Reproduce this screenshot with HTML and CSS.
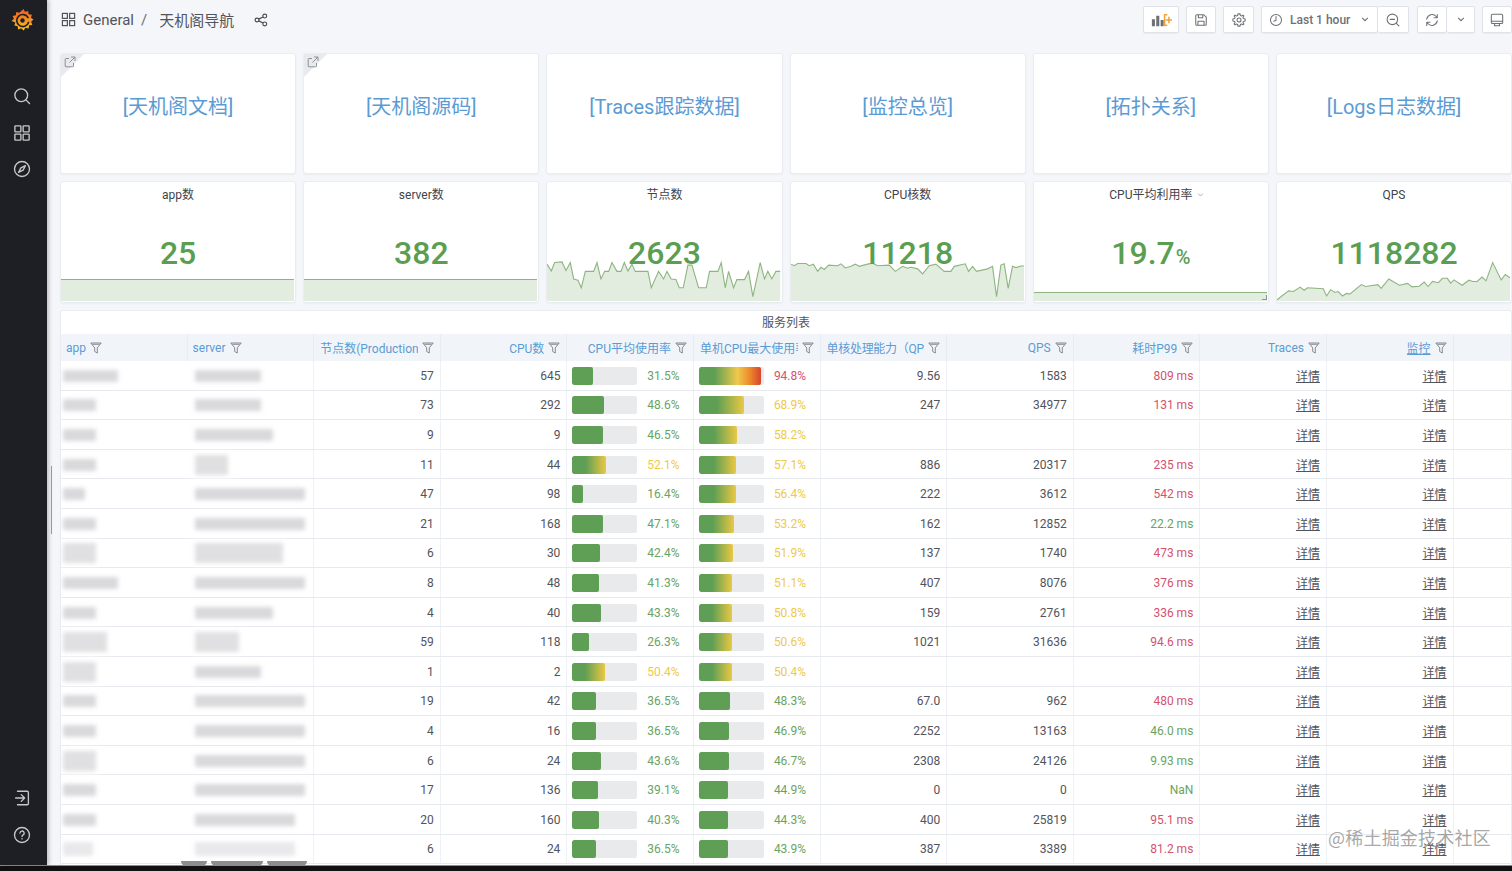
FILE: index.html
```html
<!DOCTYPE html>
<html lang="zh-CN">
<head>
<meta charset="utf-8">
<title>天机阁导航</title>
<link rel="stylesheet" href="styles.css">
</head>
<body>
<div class="app">
  <div class="shell">
    <aside class="sidebar">
      <div class="side-top">
        <svg class="logo" viewBox="0 0 24 24"><defs><linearGradient id="lg" x1="0" y1="1" x2="0" y2="0"><stop offset="0" stop-color="#f7c61e"/><stop offset="1" stop-color="#f0592a"/></linearGradient></defs><path fill="url(#lg)" d="M13 .5l1.600 3 3.200-1 .6 3.400 3.400.6-1 3.100 2.700 2-2.500 2.300 1.300 3.200-3.400.4-.5 3.400-3.300-.8-2 2.800-2.500-2.400-3.100 1.300-.6-3.400-3.400-.6 1-3.200L.5 13l2.600-2.200-1.400-3.100 3.400-.6.3-3.400 3.300.8z"/><path fill="none" stroke="#1d1f24" stroke-width="1.700" stroke-linecap="round" d="M17.800 9.500A6.300 6.300 0 1 0 18.300 14.500"/><circle cx="12" cy="12.500" r="2.300" fill="#1d1f24"/></svg>
        <nav class="side-nav">
          <svg class="side-ico" viewBox="0 0 24 24"><circle cx="11" cy="11" r="8.500"/><path d="M17.500 17.500l4.500 4.500"/></svg>
          <svg class="side-ico" viewBox="0 0 24 24"><rect x="2.500" y="2.500" width="8" height="8" rx=".8"/><rect x="13.500" y="2.500" width="8" height="8" rx=".8"/><rect x="2.500" y="13.500" width="8" height="8" rx=".8"/><rect x="13.500" y="13.500" width="8" height="8" rx=".8"/></svg>
          <svg class="side-ico" viewBox="0 0 24 24"><circle cx="12" cy="12" r="10"/><path d="M16.500 7.500l-3 6-6 3 3-6z"/></svg>
        </nav>
      </div>
      <div class="side-bottom">
        <svg class="side-ico" viewBox="0 0 24 24"><path d="M6 3h13a1.500 1.500 0 0 1 1.500 1.500v15A1.500 1.500 0 0 1 19 21H6M3.500 12H15M11 7.500l4.500 4.500-4.500 4.500"/></svg>
        <svg class="side-ico" viewBox="0 0 24 24"><circle cx="12" cy="12" r="10"/><path d="M9.300 9.500a2.800 2.800 0 1 1 4.200 2.400c-1 .6-1.500 1-1.500 2.100M12 16.800v.4"/></svg>
      </div>
    </aside>
    <main class="main">
      <header class="topbar">
        <div class="crumbs">
          <svg class="crumb-ico" viewBox="0 0 16 16"><rect x="1.500" y="1.500" width="5.300" height="5.300"/><rect x="9.200" y="1.500" width="5.300" height="5.300"/><rect x="1.500" y="9.200" width="5.300" height="5.300"/><rect x="9.200" y="9.200" width="5.300" height="5.300"/></svg>
          <span class="crumb-text">General</span>
          <span class="crumb-sep">/</span>
          <span class="crumb-text">天机阁导航</span>
          <svg class="share-ico" viewBox="0 0 16 16"><circle cx="3.500" cy="8" r="2.200"/><circle cx="12.300" cy="3.500" r="2.200"/><circle cx="12.300" cy="12.500" r="2.200"/><path d="M5.500 7l4.800-2.500M5.500 9l4.800 2.500"/></svg>
        </div>
        <div class="tools">
          <button class="tbtn wide"><svg class="ico" viewBox="0 0 24 16"><path class="solid" d="M1 7h3.500v8H1zM6 3h3.500v12H6zM11 8h3.500v7H11z"/><path class="orange" d="M18 2h-2.500v12H18M20.500 5v6M17.500 8h6"/></svg></button>
          <button class="tbtn"><svg class="ico" viewBox="0 0 16 16"><path d="M2 3.200A1.200 1.200 0 0 1 3.200 2h8l2.800 2.800v8a1.200 1.200 0 0 1-1.200 1.200H3.200A1.200 1.200 0 0 1 2 12.800zM5 2v3.500h5V2M4.500 14V9.500h7V14"/></svg></button>
          <button class="tbtn gear"><svg class="ico" viewBox="0 0 16 16"><circle cx="8" cy="8" r="2.300"/><path d="M6.800 1H9.200L9.600 2.900L10.900 3.500L12.500 2.400L13.600 3.500L12.500 5.100L13.100 6.400L15 6.800V9.200L13.100 9.600L12.500 10.900L13.600 12.500L12.500 13.600L10.900 12.500L9.600 13.100L9.200 15H6.800L6.400 13.100L5.100 12.500L3.500 13.600L2.400 12.500L3.500 10.900L2.900 9.600L1 9.200V6.800L2.900 6.400L3.500 5.100L2.400 3.500L3.500 2.400L5.100 3.500L6.400 2.900Z"/></svg></button>
          <div class="tgroup">
            <button class="tbtn time"><svg class="ico" viewBox="0 0 16 16"><circle cx="8" cy="8" r="6.300"/><path d="M8 4v4.300L5.500 9.500"/></svg><span class="time-label">Last 1 hour</span><svg class="chev" viewBox="0 0 10 6"><path d="M1.500 1L5 4.500 8.500 1"/></svg></button>
            <button class="tbtn joined zoom"><svg class="ico" viewBox="0 0 16 16"><circle cx="7.300" cy="7.300" r="6"/><path d="M11.800 11.800l3 3M4.800 7.300h5"/></svg></button>
          </div>
          <div class="tgroup">
            <button class="tbtn"><svg class="ico" viewBox="0 0 16 16"><path d="M2 7a6.200 6.200 0 0 1 10.800-3l1.200 1.400M14 1.800v3.600h-3.600M14 9a6.200 6.200 0 0 1-10.800 3L2 10.600M2 14.200v-3.600h3.600"/></svg></button>
            <button class="tbtn joined caret"><svg class="chev" viewBox="0 0 10 6"><path d="M1.500 1L5 4.500 8.500 1"/></svg></button>
          </div>
          <button class="tbtn"><svg class="ico" viewBox="0 0 16 16"><path d="M3 1.500h10A1.500 1.500 0 0 1 14.500 3v6.500h-13V3A1.500 1.500 0 0 1 3 1.500zM1.500 9.500v1A1.500 1.500 0 0 0 3 12h10a1.500 1.500 0 0 0 1.500-1.500v-1M5.500 12l-.5 2.500h6l-.5-2.500"/></svg></button>
        </div>
      </header>

      <section class="panels">
        <a class="panel link-panel"><span class="corner"><svg viewBox="0 0 12 12"><path d="M9.500 7v3a.8.800 0 0 1-.8.800H2a.8.800 0 0 1-.8-.8V3.300A.8.800 0 0 1 2 2.500h3M7 1h4v4M11 1L5.500 6.500"/></svg></span>[天机阁文档]</a>
        <a class="panel link-panel"><span class="corner"><svg viewBox="0 0 12 12"><path d="M9.500 7v3a.8.800 0 0 1-.8.800H2a.8.800 0 0 1-.8-.8V3.300A.8.800 0 0 1 2 2.500h3M7 1h4v4M11 1L5.500 6.500"/></svg></span>[天机阁源码]</a>
        <a class="panel link-panel">[Traces跟踪数据]</a>
        <a class="panel link-panel">[监控总览]</a>
        <a class="panel link-panel">[拓扑关系]</a>
        <a class="panel link-panel">[Logs日志数据]</a>

        <div class="panel stat">
          <div class="stat-title">app数</div>
          <div class="flat tall"></div>
          <div class="stat-value">25</div>
        </div>
        <div class="panel stat">
          <div class="stat-title">server数</div>
          <div class="flat tall"></div>
          <div class="stat-value">382</div>
        </div>
        <div class="panel stat">
          <div class="stat-title">节点数</div>
          <svg class="spark" viewBox="25 236 700 146" preserveAspectRatio="none"><polygon class="area" points="25,382 25,265 38,287 48,260 70,258 82,285 95,260 105,312 118,316 128,340 140,288 165,288 175,260 187,312 198,288 210,288 220,260 235,288 247,288 257,260 268,287 280,265 290,288 328,288 338,340 360,288 375,312 385,288 398,312 412,314 422,340 434,340 448,268 460,268 480,340 503,340 513,288 538,288 548,260 560,340 570,288 585,340 595,314 618,314 630,288 643,368 665,260 678,312 688,288 700,312 712,288 725,288 725,382"/><polyline class="line" points="25,265 38,287 48,260 70,258 82,285 95,260 105,312 118,316 128,340 140,288 165,288 175,260 187,312 198,288 210,288 220,260 235,288 247,288 257,260 268,287 280,265 290,288 328,288 338,340 360,288 375,312 385,288 398,312 412,314 422,340 434,340 448,268 460,268 480,340 503,340 513,288 538,288 548,260 560,340 570,288 585,340 595,314 618,314 630,288 643,368 665,260 678,312 688,288 700,312 712,288 725,288"/></svg>
          <div class="stat-value">2623</div>
        </div>
        <div class="panel stat">
          <div class="stat-title">CPU核数</div>
          <svg class="spark" viewBox="755 236 700 146" preserveAspectRatio="none"><polygon class="area" points="755,382 755,265 765,270 775,263 800,263 810,270 822,265 835,288 845,275 855,282 868,268 895,270 905,264 918,277 935,272 948,265 960,272 985,265 1000,262 1015,270 1050,268 1068,288 1090,272 1105,278 1115,275 1135,280 1150,296 1170,270 1190,265 1215,288 1235,288 1245,272 1278,264 1288,288 1300,272 1312,288 1345,280 1360,272 1372,368 1385,268 1395,264 1407,342 1420,272 1430,276 1445,271 1455,271 1455,382"/><polyline class="line" points="755,265 765,270 775,263 800,263 810,270 822,265 835,288 845,275 855,282 868,268 895,270 905,264 918,277 935,272 948,265 960,272 985,265 1000,262 1015,270 1050,268 1068,288 1090,272 1105,278 1115,275 1135,280 1150,296 1170,270 1190,265 1215,288 1235,288 1245,272 1278,264 1288,288 1300,272 1312,288 1345,280 1360,272 1372,368 1385,268 1395,264 1407,342 1420,272 1430,276 1445,271 1455,271"/></svg>
          <div class="stat-value">11218</div>
        </div>
        <div class="panel stat">
          <div class="stat-title"><span class="title-wrap">CPU平均利用率<svg class="title-chev" viewBox="0 0 10 6"><path d="M1.500 1L5 4.500 8.500 1"/></svg></span></div>
          <div class="flat short"></div>
          <div class="stat-value">19.7<span class="unit">%</span></div>
          <span class="resize"></span>
        </div>
        <div class="panel stat">
          <div class="stat-title">QPS</div>
          <svg class="spark" viewBox="740 236 705 146" preserveAspectRatio="none"><polygon class="area" points="740,382 740,378 775,350 790,352 810,338 822,348 832,340 880,343 890,366 902,346 915,355 925,352 938,366 950,358 960,360 995,330 1008,336 1045,330 1055,342 1078,312 1110,332 1135,326 1148,337 1170,335 1185,322 1197,336 1210,320 1228,324 1240,310 1255,310 1265,325 1275,315 1300,332 1320,316 1332,320 1345,320 1360,306 1372,318 1392,260 1418,315 1430,298 1445,308 1445,382"/><polyline class="line" points="740,378 775,350 790,352 810,338 822,348 832,340 880,343 890,366 902,346 915,355 925,352 938,366 950,358 960,360 995,330 1008,336 1045,330 1055,342 1078,312 1110,332 1135,326 1148,337 1170,335 1185,322 1197,336 1210,320 1228,324 1240,310 1255,310 1265,325 1275,315 1300,332 1320,316 1332,320 1345,320 1360,306 1372,318 1392,260 1418,315 1430,298 1445,308"/></svg>
          <div class="stat-value">1118282</div>
        </div>
      </section>

      <section class="panel table-panel">
        <div class="table-title">服务列表</div>
        <div class="row head">
          <div class="th left"><span class="th-label">app</span><svg class="funnel" viewBox="0 0 12 12"><path d="M.8 1h10.400L7.300 5.800v5.200L4.700 9.500V5.800zM2.500 2.300h7"/></svg></div>
          <div class="th left"><span class="th-label">server</span><svg class="funnel" viewBox="0 0 12 12"><path d="M.8 1h10.400L7.300 5.800v5.200L4.700 9.500V5.800zM2.500 2.300h7"/></svg></div>
          <div class="th"><span class="th-label">节点数(Production)</span><svg class="funnel" viewBox="0 0 12 12"><path d="M.8 1h10.400L7.300 5.800v5.200L4.700 9.500V5.800zM2.500 2.300h7"/></svg></div>
          <div class="th"><span class="th-label">CPU数</span><svg class="funnel" viewBox="0 0 12 12"><path d="M.8 1h10.400L7.300 5.800v5.200L4.700 9.500V5.800zM2.500 2.300h7"/></svg></div>
          <div class="th"><span class="th-label">CPU平均使用率</span><svg class="funnel" viewBox="0 0 12 12"><path d="M.8 1h10.400L7.300 5.800v5.200L4.700 9.500V5.800zM2.500 2.300h7"/></svg></div>
          <div class="th"><span class="th-label">单机CPU最大使用率</span><svg class="funnel" viewBox="0 0 12 12"><path d="M.8 1h10.400L7.300 5.800v5.200L4.700 9.500V5.800zM2.500 2.300h7"/></svg></div>
          <div class="th"><span class="th-label tight">单核处理能力（QPS）</span><svg class="funnel" viewBox="0 0 12 12"><path d="M.8 1h10.400L7.300 5.800v5.200L4.700 9.500V5.800zM2.500 2.300h7"/></svg></div>
          <div class="th"><span class="th-label">QPS</span><svg class="funnel" viewBox="0 0 12 12"><path d="M.8 1h10.400L7.300 5.800v5.200L4.700 9.500V5.800zM2.500 2.300h7"/></svg></div>
          <div class="th"><span class="th-label">耗时P99</span><svg class="funnel" viewBox="0 0 12 12"><path d="M.8 1h10.400L7.300 5.800v5.200L4.700 9.500V5.800zM2.500 2.300h7"/></svg></div>
          <div class="th"><span class="th-label">Traces</span><svg class="funnel" viewBox="0 0 12 12"><path d="M.8 1h10.400L7.300 5.800v5.200L4.700 9.500V5.800zM2.500 2.300h7"/></svg></div>
          <div class="th"><span class="th-label under">监控</span><svg class="funnel" viewBox="0 0 12 12"><path d="M.8 1h10.400L7.300 5.800v5.200L4.700 9.500V5.800zM2.500 2.300h7"/></svg></div>
          <div class="th filler"></div>
        </div>

        <div class="row"><div class="td cname"><i class="redact w55"></i></div><div class="td srv"><i class="redact w66"></i></div><div class="td">57</div><div class="td">645</div><div class="td gauge"><div class="track"><div class="fill" style="width:31.5%"></div></div><span class="pct ok">31.5%</span></div><div class="td gauge"><div class="track"><div class="fill hot" style="width:94.8%"></div></div><span class="pct bad">94.8%</span></div><div class="td">9.56</div><div class="td">1583</div><div class="td bad">809 ms</div><div class="td"><a class="lnk">详情</a></div><div class="td"><a class="lnk">详情</a></div><div class="td filler"></div></div>
        <div class="row"><div class="td cname"><i class="redact w33"></i></div><div class="td srv"><i class="redact w66"></i></div><div class="td">73</div><div class="td">292</div><div class="td gauge"><div class="track"><div class="fill" style="width:48.6%"></div></div><span class="pct ok">48.6%</span></div><div class="td gauge"><div class="track"><div class="fill warn" style="width:68.9%"></div></div><span class="pct mid">68.9%</span></div><div class="td">247</div><div class="td">34977</div><div class="td bad">131 ms</div><div class="td"><a class="lnk">详情</a></div><div class="td"><a class="lnk">详情</a></div><div class="td filler"></div></div>
        <div class="row"><div class="td cname"><i class="redact w33"></i></div><div class="td srv"><i class="redact w78"></i></div><div class="td">9</div><div class="td">9</div><div class="td gauge"><div class="track"><div class="fill" style="width:46.5%"></div></div><span class="pct ok">46.5%</span></div><div class="td gauge"><div class="track"><div class="fill warn" style="width:58.2%"></div></div><span class="pct mid">58.2%</span></div><div class="td"></div><div class="td"></div><div class="td"></div><div class="td"><a class="lnk">详情</a></div><div class="td"><a class="lnk">详情</a></div><div class="td filler"></div></div>
        <div class="row"><div class="td cname"><i class="redact w33"></i></div><div class="td srv"><i class="redact w33 tall"></i></div><div class="td">11</div><div class="td">44</div><div class="td gauge"><div class="track"><div class="fill warn" style="width:52.1%"></div></div><span class="pct mid">52.1%</span></div><div class="td gauge"><div class="track"><div class="fill warn" style="width:57.1%"></div></div><span class="pct mid">57.1%</span></div><div class="td">886</div><div class="td">20317</div><div class="td bad">235 ms</div><div class="td"><a class="lnk">详情</a></div><div class="td"><a class="lnk">详情</a></div><div class="td filler"></div></div>
        <div class="row"><div class="td cname"><i class="redact w22"></i></div><div class="td srv"><i class="redact w110"></i></div><div class="td">47</div><div class="td">98</div><div class="td gauge"><div class="track"><div class="fill" style="width:16.4%"></div></div><span class="pct ok">16.4%</span></div><div class="td gauge"><div class="track"><div class="fill warn" style="width:56.4%"></div></div><span class="pct mid">56.4%</span></div><div class="td">222</div><div class="td">3612</div><div class="td bad">542 ms</div><div class="td"><a class="lnk">详情</a></div><div class="td"><a class="lnk">详情</a></div><div class="td filler"></div></div>
        <div class="row"><div class="td cname"><i class="redact w33"></i></div><div class="td srv"><i class="redact w110"></i></div><div class="td">21</div><div class="td">168</div><div class="td gauge"><div class="track"><div class="fill" style="width:47.1%"></div></div><span class="pct ok">47.1%</span></div><div class="td gauge"><div class="track"><div class="fill warn" style="width:53.2%"></div></div><span class="pct mid">53.2%</span></div><div class="td">162</div><div class="td">12852</div><div class="td ok">22.2 ms</div><div class="td"><a class="lnk">详情</a></div><div class="td"><a class="lnk">详情</a></div><div class="td filler"></div></div>
        <div class="row"><div class="td cname"><i class="redact w33 tall"></i></div><div class="td srv"><i class="redact w88 tall"></i></div><div class="td">6</div><div class="td">30</div><div class="td gauge"><div class="track"><div class="fill" style="width:42.4%"></div></div><span class="pct ok">42.4%</span></div><div class="td gauge"><div class="track"><div class="fill warn" style="width:51.9%"></div></div><span class="pct mid">51.9%</span></div><div class="td">137</div><div class="td">1740</div><div class="td bad">473 ms</div><div class="td"><a class="lnk">详情</a></div><div class="td"><a class="lnk">详情</a></div><div class="td filler"></div></div>
        <div class="row"><div class="td cname"><i class="redact w55"></i></div><div class="td srv"><i class="redact w110"></i></div><div class="td">8</div><div class="td">48</div><div class="td gauge"><div class="track"><div class="fill" style="width:41.3%"></div></div><span class="pct ok">41.3%</span></div><div class="td gauge"><div class="track"><div class="fill warn" style="width:51.1%"></div></div><span class="pct mid">51.1%</span></div><div class="td">407</div><div class="td">8076</div><div class="td bad">376 ms</div><div class="td"><a class="lnk">详情</a></div><div class="td"><a class="lnk">详情</a></div><div class="td filler"></div></div>
        <div class="row"><div class="td cname"><i class="redact w33"></i></div><div class="td srv"><i class="redact w78"></i></div><div class="td">4</div><div class="td">40</div><div class="td gauge"><div class="track"><div class="fill" style="width:43.3%"></div></div><span class="pct ok">43.3%</span></div><div class="td gauge"><div class="track"><div class="fill warn" style="width:50.8%"></div></div><span class="pct mid">50.8%</span></div><div class="td">159</div><div class="td">2761</div><div class="td bad">336 ms</div><div class="td"><a class="lnk">详情</a></div><div class="td"><a class="lnk">详情</a></div><div class="td filler"></div></div>
        <div class="row"><div class="td cname"><i class="redact w44 tall"></i></div><div class="td srv"><i class="redact w44 tall"></i></div><div class="td">59</div><div class="td">118</div><div class="td gauge"><div class="track"><div class="fill" style="width:26.3%"></div></div><span class="pct ok">26.3%</span></div><div class="td gauge"><div class="track"><div class="fill warn" style="width:50.6%"></div></div><span class="pct mid">50.6%</span></div><div class="td">1021</div><div class="td">31636</div><div class="td bad">94.6 ms</div><div class="td"><a class="lnk">详情</a></div><div class="td"><a class="lnk">详情</a></div><div class="td filler"></div></div>
        <div class="row"><div class="td cname"><i class="redact w33 tall"></i></div><div class="td srv"><i class="redact w66"></i></div><div class="td">1</div><div class="td">2</div><div class="td gauge"><div class="track"><div class="fill warn" style="width:50.4%"></div></div><span class="pct mid">50.4%</span></div><div class="td gauge"><div class="track"><div class="fill warn" style="width:50.4%"></div></div><span class="pct mid">50.4%</span></div><div class="td"></div><div class="td"></div><div class="td"></div><div class="td"><a class="lnk">详情</a></div><div class="td"><a class="lnk">详情</a></div><div class="td filler"></div></div>
        <div class="row"><div class="td cname"><i class="redact w33"></i></div><div class="td srv"><i class="redact w110"></i></div><div class="td">19</div><div class="td">42</div><div class="td gauge"><div class="track"><div class="fill" style="width:36.5%"></div></div><span class="pct ok">36.5%</span></div><div class="td gauge"><div class="track"><div class="fill" style="width:48.3%"></div></div><span class="pct ok">48.3%</span></div><div class="td">67.0</div><div class="td">962</div><div class="td bad">480 ms</div><div class="td"><a class="lnk">详情</a></div><div class="td"><a class="lnk">详情</a></div><div class="td filler"></div></div>
        <div class="row"><div class="td cname"><i class="redact w33"></i></div><div class="td srv"><i class="redact w110"></i></div><div class="td">4</div><div class="td">16</div><div class="td gauge"><div class="track"><div class="fill" style="width:36.5%"></div></div><span class="pct ok">36.5%</span></div><div class="td gauge"><div class="track"><div class="fill" style="width:46.9%"></div></div><span class="pct ok">46.9%</span></div><div class="td">2252</div><div class="td">13163</div><div class="td ok">46.0 ms</div><div class="td"><a class="lnk">详情</a></div><div class="td"><a class="lnk">详情</a></div><div class="td filler"></div></div>
        <div class="row"><div class="td cname"><i class="redact w33 tall"></i></div><div class="td srv"><i class="redact w110"></i></div><div class="td">6</div><div class="td">24</div><div class="td gauge"><div class="track"><div class="fill" style="width:43.6%"></div></div><span class="pct ok">43.6%</span></div><div class="td gauge"><div class="track"><div class="fill" style="width:46.7%"></div></div><span class="pct ok">46.7%</span></div><div class="td">2308</div><div class="td">24126</div><div class="td ok">9.93 ms</div><div class="td"><a class="lnk">详情</a></div><div class="td"><a class="lnk">详情</a></div><div class="td filler"></div></div>
        <div class="row"><div class="td cname"><i class="redact w33"></i></div><div class="td srv"><i class="redact w110"></i></div><div class="td">17</div><div class="td">136</div><div class="td gauge"><div class="track"><div class="fill" style="width:39.1%"></div></div><span class="pct ok">39.1%</span></div><div class="td gauge"><div class="track"><div class="fill" style="width:44.9%"></div></div><span class="pct ok">44.9%</span></div><div class="td">0</div><div class="td">0</div><div class="td ok">NaN</div><div class="td"><a class="lnk">详情</a></div><div class="td"><a class="lnk">详情</a></div><div class="td filler"></div></div>
        <div class="row"><div class="td cname"><i class="redact w33"></i></div><div class="td srv"><i class="redact w100"></i></div><div class="td">20</div><div class="td">160</div><div class="td gauge"><div class="track"><div class="fill" style="width:40.3%"></div></div><span class="pct ok">40.3%</span></div><div class="td gauge"><div class="track"><div class="fill" style="width:44.3%"></div></div><span class="pct ok">44.3%</span></div><div class="td">400</div><div class="td">25819</div><div class="td bad">95.1 ms</div><div class="td"><a class="lnk">详情</a></div><div class="td"><a class="lnk">详情</a></div><div class="td filler"></div></div>
        <div class="row"><div class="td cname"><i class="redact w30 faint"></i></div><div class="td srv"><i class="redact w100 faint"></i></div><div class="td">6</div><div class="td">24</div><div class="td gauge"><div class="track"><div class="fill" style="width:36.5%"></div></div><span class="pct ok">36.5%</span></div><div class="td gauge"><div class="track"><div class="fill" style="width:43.9%"></div></div><span class="pct ok">43.9%</span></div><div class="td">387</div><div class="td">3389</div><div class="td bad">81.2 ms</div><div class="td"><a class="lnk">详情</a></div><div class="td"><a class="lnk">详情</a></div><div class="td filler"></div></div>
      </section>
    </main>
  </div>
  <div class="bottom-bar"></div>
  <span class="edge-mark"></span>
  <div class="blobs"><i></i><i></i><i></i></div>
  <div class="watermark">@稀土掘金技术社区</div>
</div>
</body>
</html>
```
FILE: styles.css
```css
* { box-sizing: border-box; }
html, body { margin: 0; height: 100%; overflow: hidden; }
body {
  font-family: Roboto, "Noto Sans CJK SC", "Liberation Sans", sans-serif;
  font-size: 12px;
  color: #52545c;
  background: #f5f6f9;
}
.app { position: relative; height: 871px; display: flex; flex-direction: column; overflow: hidden; }
.shell { flex: 1; min-height: 0; display: flex; }
.bottom-bar { height: 6px; flex: none; background: #111; border-top: 1px solid #8d8d8d; }

/* sidebar */
.sidebar {
  flex: none; width: 47px; background: #1d1f24;
  display: flex; flex-direction: column; justify-content: space-between; align-items: center;
  padding: 8px 3px 21px 0;
  box-shadow: 2px 0 4px rgba(0,0,0,.22);
  z-index: 2;
}
.side-top, .side-nav, .side-bottom { display: flex; flex-direction: column; align-items: center; }
.logo { width: 23px; height: 24px; }
.side-nav { gap: 18.500px; margin-top: 55px; }
.side-bottom { gap: 19px; }
.side-ico { width: 18px; height: 18px; fill: none; stroke: #c7c8ca; stroke-width: 1.800; stroke-linecap: round; stroke-linejoin: round; }

/* main */
.main { flex: 1; min-width: 0; padding-left: 13px; display: flex; flex-direction: column; }
.topbar { height: 53px; flex: none; display: flex; justify-content: space-between; padding-bottom: 14px; align-items: center; }
.crumbs { display: flex; align-items: center; padding-left: 1px; }
.crumb-ico { width: 15px; height: 15px; fill: none; stroke: #52545c; stroke-width: 1.300; margin-right: 7px; }
.crumb-text { font-size: 15px; color: #52545c; }
.crumb-sep { font-size: 15px; color: #6a6d74; margin: 0 12px 0 7px; }
.share-ico { width: 14px; height: 14px; fill: none; stroke: #464c54; stroke-width: 1.300; margin-left: 20px; }

.tools { display: flex; align-items: center; gap: 7px; }
.tbtn {
  height: 27px; width: 30px; padding: 0; background: #fff;
  border: 1px solid #dfe3e9; border-radius: 2px;
  display: flex; align-items: center; justify-content: center;
  box-shadow: 0 1px 1px rgba(0,0,0,.04);
  font-family: inherit;
}
.tbtn.wide { width: 36px; }
.tbtn.gear, .tbtn.zoom { width: 31px; }
.tgroup { display: flex; }
.tgroup + .tgroup { margin-left: 1px; }
.tbtn.joined { border-left: 0; }
.tbtn.time { width: 117px; justify-content: flex-start; padding-left: 7px; }
.tbtn.caret { width: 28px; }
.ico { width: 14px; height: 14px; fill: none; stroke: #6d7076; stroke-width: 1.200; stroke-linecap: round; stroke-linejoin: round; }
.wide .ico { width: 21px; }
.ico .solid { fill: #6d7076; stroke: none; }
.ico .orange { stroke: #f0a23c; stroke-width: 1.800; }
.time-label { font-size: 12px; font-weight: 500; color: #6d7076; margin-left: 7px; }
.chev { width: 8px; height: 5px; fill: none; stroke: #6d7076; stroke-width: 1.300; }
.time .chev { margin-left: 11px; }

/* panels */
.panel { background: #fff; border: 1px solid #e9edf2; border-radius: 3px; box-shadow: 0 1px 2px rgba(0,0,0,.04); }
.panels { display: grid; grid-template-columns: repeat(6, 236.200px); grid-template-rows: 121px 122px; gap: 7px; margin-bottom: 7px; flex: none; }
.link-panel {
  position: relative; display: flex; align-items: center; justify-content: center;
  padding-bottom: 17px;
  font-size: 20px; color: #5b9bd5; font-weight: 400;
}
.corner { position: absolute; left: 0; top: 0; width: 0; height: 0; border-style: solid; border-width: 23px 23px 0 0; border-color: #e8eaed transparent transparent transparent; }
.corner svg { position: absolute; left: 3px; top: -21px; width: 12px; height: 12px; fill: none; stroke: #8c9097; stroke-width: 1; }

.stat { position: relative; overflow: hidden; text-align: center; }
.stat-title { font-size: 12px; font-weight: 400; color: #3f444c; padding-top: 5px; line-height: 16px; position: relative; }
.title-wrap { position: relative; display: inline-block; }
.title-chev { position: absolute; left: 100%; top: 6px; width: 7px; height: 4px; fill: none; stroke: #9a9ca2; stroke-width: 1.200; margin-left: 5px; }
.stat-value { position: absolute; left: 0; right: 0; top: 51px; font-size: 32px; font-weight: 500; line-height: 40px; color: #5a9e52; }
.unit { font-size: 20px; font-weight: 500; margin-left: 1px; }
.spark { position: absolute; left: 0; bottom: 1px; width: calc(100% - 1px); height: 46px; }
.area { fill: #e3eddf; }
.line { fill: none; stroke: #8db582; vector-effect: non-scaling-stroke; stroke-width: 1.100; }
.flat { position: absolute; left: 0; right: 1px; bottom: 1px; background: #e3eddf; border-top: 1px solid #8db582; }
.flat.tall { height: 22px; }
.flat.short { height: 9px; }
.resize { position: absolute; right: 1px; bottom: 2px; width: 5px; height: 5px; border-right: 1px solid #8f9399; border-bottom: 1px solid #8f9399; }

/* table */
.table-panel { flex: 1; min-height: 0; overflow: hidden; border-bottom: 0; }
.table-title { height: 23px; text-align: center; font-size: 12px; line-height: 24px; color: #52545c; }
.row { display: grid; grid-template-columns: repeat(11, 126.600px) 1fr; height: 29.600px; border-bottom: 1px solid #e6e9ee; }
.row.head { height: 27px; background: #f1f5f9; border-bottom: 0; }
.th {
  display: flex; align-items: center; justify-content: flex-end; gap: 4px;
  padding: 0 6px; min-width: 0;
  border-right: 1px solid #e9edf2; color: #5b9bd5; font-size: 12px;
}
.th.left { justify-content: flex-start; padding-left: 5px; }
.th.filler { border-right: 0; }
.th-label { overflow: hidden; white-space: nowrap; flex: 0 1 auto; min-width: 0; }
.th-label.tight { letter-spacing: -.3px; }
.under { text-decoration: underline; }
.funnel { flex: none; width: 12px; height: 12px; fill: none; stroke: #7b8087; stroke-width: .9; stroke-linejoin: round; }
.td {
  display: flex; align-items: center; justify-content: flex-end;
  padding: 1px 6px 0; min-width: 0; font-size: 12px;
  border-right: 1px solid #eef1f5; color: #52545c;
}
.td.filler { border-right: 0; }
.td.cname { justify-content: flex-start; padding-left: 2px; border-right: 0; }
.td.srv { justify-content: flex-start; padding-left: 7px; }
.td.gauge { justify-content: space-between; padding: 1px 13.500px 0 5px; }
.td.bad { color: #d4526e; }
.td.ok { color: #6aa35f; }
.track { width: 65px; height: 18px; background: #e9eaec; border-radius: 2px; overflow: hidden; flex: none; }
.fill { height: 100%; background: #5f9f55; border-radius: 2px; }
.fill.warn { background: linear-gradient(90deg, #5f9f55 40%, #eac843 100%); }
.fill.hot { background: linear-gradient(90deg, #5f9f55 25%, #eec94a 62%, #ec8a2c 82%, #d8442c 100%); }
.pct { font-size: 12px; }
.pct.ok { color: #6aa35f; }
.pct.mid { color: #eec94a; }
.pct.bad { color: #d4526e; }
.lnk { color: #52545c; text-decoration: underline; margin-bottom: 1px; }

.redact { display: block; height: 12px; background: #d9d9dc; filter: blur(2px); box-shadow: 0 0 0 3px #fff; }
.redact.tall { height: 20px; background: #e0e0e2; }
.redact.faint { background: #e9e9eb; height: 14px; }
.w22 { width: 22px; } .w30 { width: 30px; } .w33 { width: 33px; } .w44 { width: 44px; }
.w55 { width: 55px; } .w66 { width: 66px; } .w78 { width: 78px; } .w88 { width: 88px; }
.w100 { width: 100px; } .w110 { width: 110px; }

/* overlays */
.edge-mark { position: absolute; left: 51px; top: 466px; width: 1px; height: 68px; background: #9a9ca0; }
.blobs { position: absolute; left: 181px; top: 861px; display: flex; gap: 4px; }
.blobs i { display: block; height: 5px; width: 26px; background: #8d8d8d; border-radius: 0 0 6px 6px; }
.blobs i:nth-child(2) { width: 52px; }
.blobs i:nth-child(3) { width: 40px; border-radius: 0 0 14px 14px; }
.watermark { position: absolute; left: 1328px; top: 825px; font-size: 18px; line-height: 24px; letter-spacing: .2px; color: rgba(110,110,110,.62); font-family: "Noto Sans CJK SC", sans-serif; }
```
